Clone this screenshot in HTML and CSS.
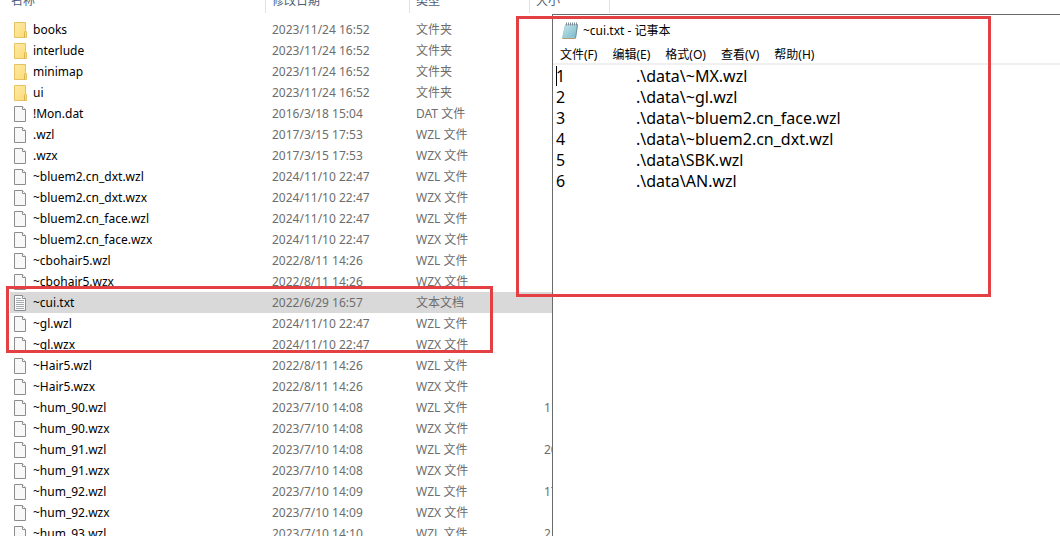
FILE: index.html
```html
<!DOCTYPE html>
<html lang="zh-CN">
<head>
  <meta charset="UTF-8">
  <meta name="viewport" content="width=device-width, initial-scale=1.0">
  <title>~cui.txt - 记事本</title>
  <link rel="stylesheet" href="styles.css">
</head>
<body>
  <svg class="sprite" aria-hidden="true">
    <defs>
      <linearGradient id="folderFill" x1="0" y1="0" x2="1" y2="1">
        <stop offset="0" stop-color="#ffeaa5"></stop>
        <stop offset="1" stop-color="#fbdb74"></stop>
      </linearGradient>
      <linearGradient id="padFill" x1="0" y1="0" x2="1" y2="1">
        <stop offset="0" stop-color="#c6e8ef"></stop>
        <stop offset="1" stop-color="#78b6c6"></stop>
      </linearGradient>
    </defs>
    <symbol id="folder" viewBox="0 0 13 16">
      <path d="M.5.5h11v8l1 1v6H.5z" fill="url(#folderFill)" stroke="#e5c365"></path>
      <path d="M10.5 15.5v-5l1-1.500" fill="none" stroke="#d9b44f"></path>
    </symbol>
    <symbol id="file" viewBox="0 0 13 16">
      <path d="M.5.5h8l3 3v12H.5z" fill="#f8f8f8" stroke="#8c8c8c"></path>
      <path d="M8.500 .5v3h3" fill="#fff" stroke="#8c8c8c"></path>
    </symbol>
    <symbol id="text" viewBox="0 0 13 16">
      <path d="M.5.5h8l3 3v12H.5z" fill="#fbfbfb" stroke="#8c8c8c"></path>
      <path d="M8.500 .5v3h3" fill="#fff" stroke="#8c8c8c"></path>
      <path d="M2 3.500h5M2 5.500h8M2 7.500h8M2 9.500h8M2 11.500h8M2 13.500h8" stroke="#a4a9ad"></path>
    </symbol>
  </svg>

  <main class="explorer">
    <table class="files">
      <colgroup>
        <col class="col-name">
        <col class="col-date">
        <col class="col-type">
        <col class="col-size">
      </colgroup>
      <thead>
        <tr><th>名称</th><th>修改日期</th><th>类型</th><th>大小</th></tr>
      </thead>
      <tbody id="fileRows"></tbody>
    </table>
  </main>

  <section class="notepad">
    <header class="titlebar">
      <svg class="pad-icon" viewBox="0 0 16 17" aria-hidden="true">
        <path d="M3.500 2.500h12l-2 13.500H.5z" fill="url(#padFill)" stroke="#a3cbd5"></path>
        <path d="M13.500 16l2-13.500" stroke="#6c8f9a"></path>
        <path d="M.5 16.500h13" stroke="#b59a78"></path>
        <path d="M4.500 .5v3M6.500 .5v3M8.500 .5v3M10.500 .5v3M12.500 .5v3M14.500 .5v3" stroke="#7d8f96"></path>
      </svg>
      <span>~cui.txt - 记事本</span>
    </header>
    <nav class="menubar">
      <button>文件(F)</button>
      <button>编辑(E)</button>
      <button>格式(O)</button>
      <button>查看(V)</button>
      <button>帮助(H)</button>
    </nav>
    <div class="editor">
      <textarea aria-label="~cui.txt" spellcheck="false" wrap="off">
1&#9;.\data\~MX.wzl
2&#9;.\data\~gl.wzl
3&#9;.\data\~bluem2.cn_face.wzl
4&#9;.\data\~bluem2.cn_dxt.wzl
5&#9;.\data\SBK.wzl
6&#9;.\data\AN.wzl</textarea>
      <span class="caret"></span>
    </div>
  </section>

  <div class="mark mark-files"></div>
  <div class="mark mark-notepad"></div>

  <script>
    // name, date, type, size
    const files = [
      ['books', '2023/11/24 16:52', '文件夹'],
      ['interlude', '2023/11/24 16:52', '文件夹'],
      ['minimap', '2023/11/24 16:52', '文件夹'],
      ['ui', '2023/11/24 16:52', '文件夹'],
      ['!Mon.dat', '2016/3/18 15:04', 'DAT 文件'],
      ['.wzl', '2017/3/15 17:53', 'WZL 文件'],
      ['.wzx', '2017/3/15 17:53', 'WZX 文件'],
      ['~bluem2.cn_dxt.wzl', '2024/11/10 22:47', 'WZL 文件'],
      ['~bluem2.cn_dxt.wzx', '2024/11/10 22:47', 'WZX 文件'],
      ['~bluem2.cn_face.wzl', '2024/11/10 22:47', 'WZL 文件'],
      ['~bluem2.cn_face.wzx', '2024/11/10 22:47', 'WZX 文件'],
      ['~cbohair5.wzl', '2022/8/11 14:26', 'WZL 文件'],
      ['~cbohair5.wzx', '2022/8/11 14:26', 'WZX 文件'],
      ['~cui.txt', '2022/6/29 16:57', '文本文档'],
      ['~gl.wzl', '2024/11/10 22:47', 'WZL 文件'],
      ['~gl.wzx', '2024/11/10 22:47', 'WZX 文件'],
      ['~Hair5.wzl', '2022/8/11 14:26', 'WZL 文件'],
      ['~Hair5.wzx', '2022/8/11 14:26', 'WZX 文件'],
      ['~hum_90.wzl', '2023/7/10 14:08', 'WZL 文件', '1'],
      ['~hum_90.wzx', '2023/7/10 14:08', 'WZX 文件'],
      ['~hum_91.wzl', '2023/7/10 14:08', 'WZL 文件', '20'],
      ['~hum_91.wzx', '2023/7/10 14:08', 'WZX 文件'],
      ['~hum_92.wzl', '2023/7/10 14:09', 'WZL 文件', '17'],
      ['~hum_92.wzx', '2023/7/10 14:09', 'WZX 文件'],
      ['~hum_93.wzl', '2023/7/10 14:10', 'WZL 文件', '2']
    ];
    const icons = { '文件夹': 'folder', '文本文档': 'text' };

    document.getElementById('fileRows').innerHTML = files.map(([name, date, type, size = '']) => `
      <tr class="${name === '~cui.txt' ? 'selected' : ''}">
        <td class="name"><div class="entry"><svg class="icon" aria-hidden="true"><use href="#${icons[type] || 'file'}"></use></svg>${name}</div></td>
        <td>${date}</td>
        <td>${type}</td>
        <td class="size">${size}</td>
      </tr>`).join('');
  </script>
</body>
</html>
```
FILE: styles.css
```css
body {
  margin: 0;
  height: 100vh;
  position: relative;
  overflow: hidden;
  background: #fff;
  font-family: 'Noto Sans', 'Noto Sans CJK SC', sans-serif;
  font-size: 12px;
  color: #000;
}
.sprite {
  position: absolute;
  width: 0;
  height: 0;
}
/* file list, scrolled so the column heads are half out of view */
.explorer {
  height: 100%;
  overflow: hidden;
  display: flow-root;
}
.files {
  margin: -12px 0 0 10px;
  width: 600px;
  table-layout: fixed;
  border-collapse: separate;
  border-spacing: 0;
}
.col-name {
  width: 256px;
}
.col-date {
  width: 144px;
}
.col-type {
  width: 120px;
}
.col-size {
  width: 80px;
}
.files th {
  box-sizing: border-box;
  height: 25px;
  padding: 0 6px;
  border-right: 1px solid #e2e2e2;
  color: #4c607a;
  font-weight: normal;
  line-height: 16px;
  text-align: left;
}
.files th:first-child {
  padding-left: 1px;
}
.files tbody::before {
  content: '';
  display: block;
  height: 6px;
}
.files td {
  height: 21px;
  padding: 0 6px;
  color: #6d6d6d;
  line-height: 21px;
  white-space: nowrap;
}
.files td.name {
  padding: 0 4px;
  color: #000;
}
.files td.size {
  padding-left: 14px;
}
.selected td {
  background: #d9d9d9;
}
.entry {
  display: flex;
  align-items: center;
  gap: 6px;
}
.icon {
  width: 13px;
  height: 16px;
}
/* notepad window on top of the list */
.notepad {
  position: absolute;
  top: 14px;
  left: 552px;
  right: 0;
  bottom: 0;
  display: flex;
  flex-direction: column;
  border-top: 1px solid #6a6a6a;
  border-left: 1px solid #6a6a6a;
  background: #fff;
}
.titlebar {
  display: flex;
  align-items: center;
  gap: 5px;
  height: 30px;
  padding-left: 9px;
}
.pad-icon {
  width: 16px;
  height: 17px;
}
.menubar {
  display: flex;
  gap: 15px;
  padding-left: 7px;
  border-bottom: 2px solid #f0f0f0;
}
.menubar button {
  padding: 2px 0 0;
  border: none;
  background: none;
  color: #000;
  font: inherit;
  line-height: 16px;
}
.editor {
  position: relative;
  flex: 1;
  display: flex;
}
.editor textarea {
  flex: 1;
  padding: 1px 3px;
  border: none;
  outline: none;
  resize: none;
  overflow: hidden;
  background: none;
  color: #000;
  font: inherit;
  font-size: 16px;
  line-height: 21px;
  tab-size: 80px;
}
.caret {
  position: absolute;
  top: 1px;
  left: 3px;
  width: 1px;
  height: 20px;
  background: #000;
}
/* red highlight frames */
.mark {
  position: absolute;
  box-sizing: border-box;
  border: 3px solid #e34043;
  pointer-events: none;
}
.mark-files {
  top: 286px;
  left: 6px;
  width: 487px;
  height: 67px;
}
.mark-notepad {
  top: 16px;
  left: 516px;
  width: 475px;
  height: 281px;
}
```
